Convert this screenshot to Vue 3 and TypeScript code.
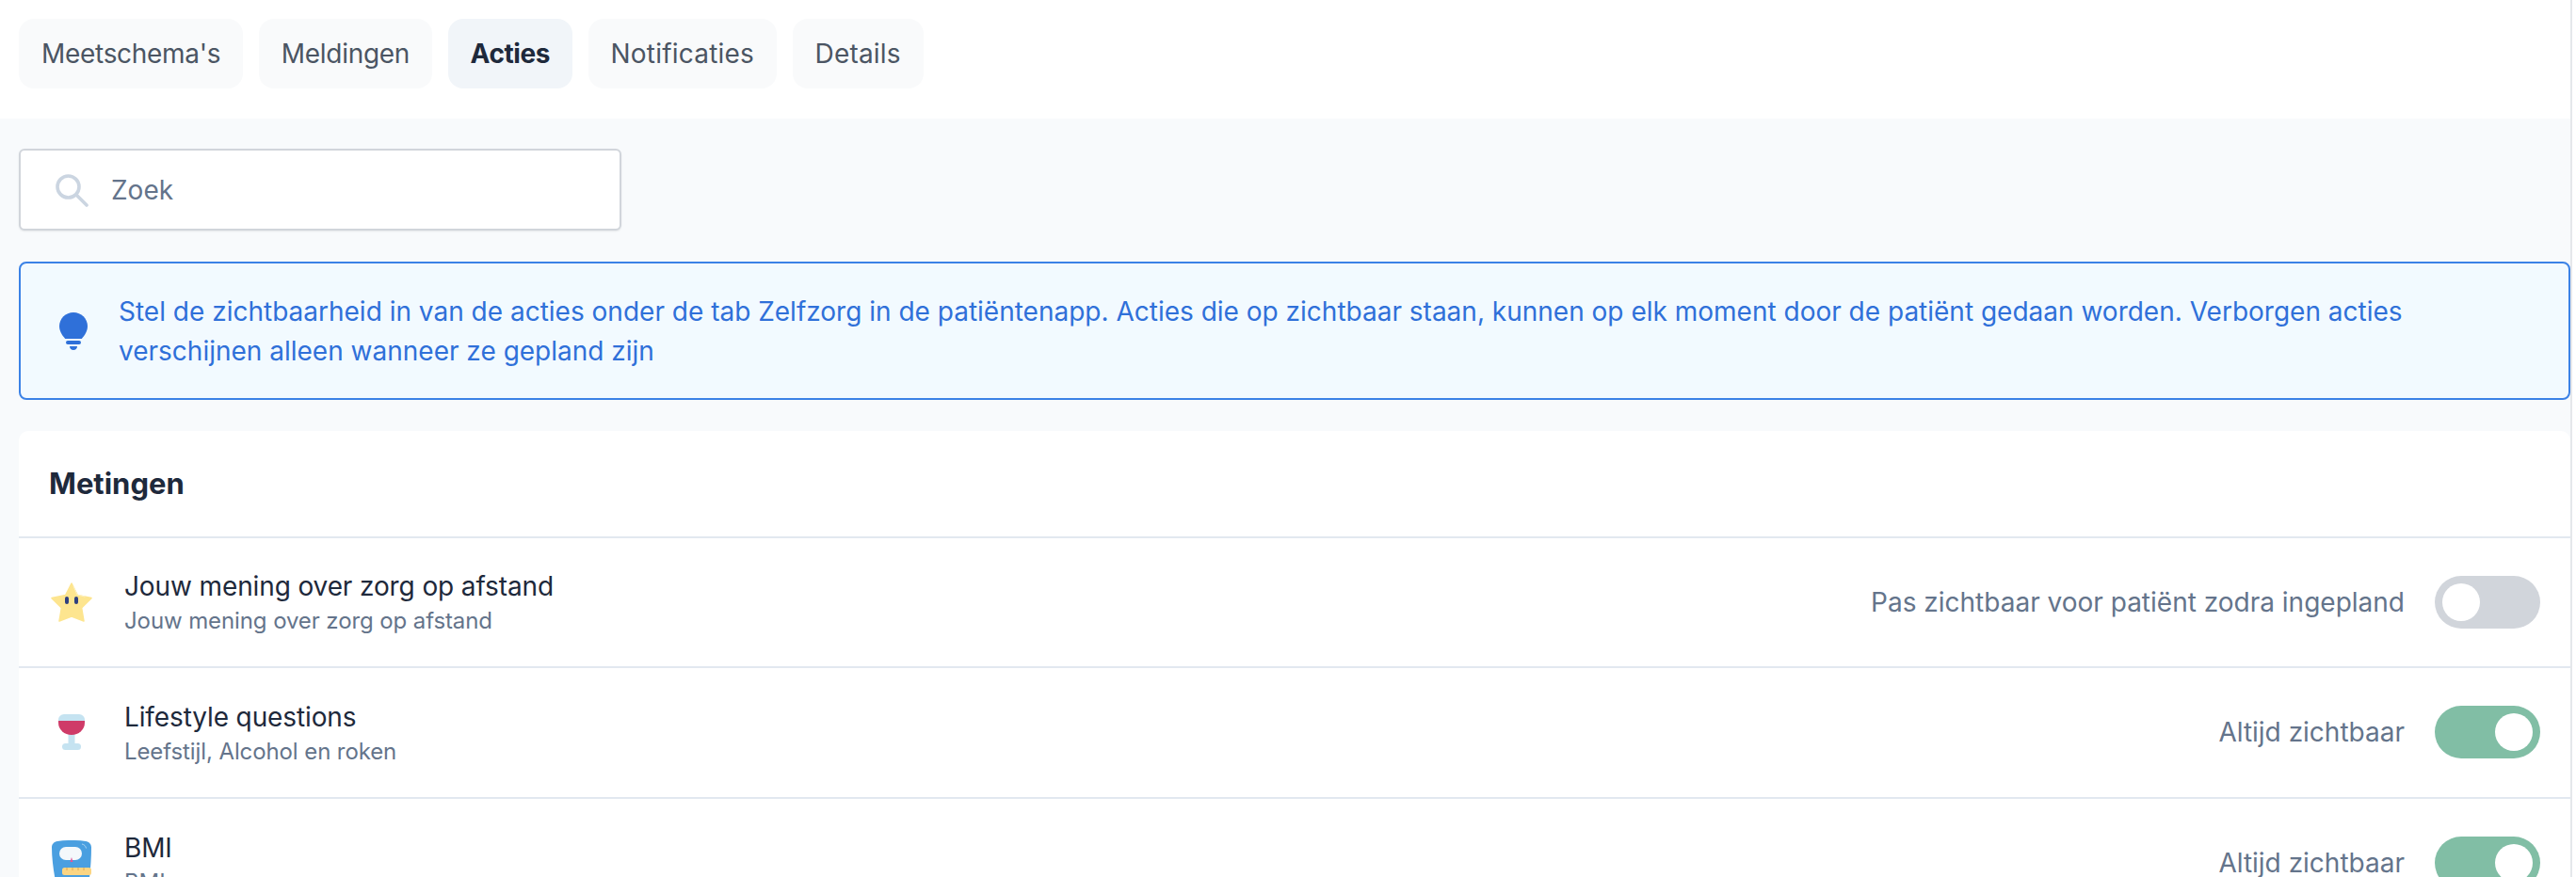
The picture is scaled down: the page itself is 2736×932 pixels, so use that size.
<script setup lang="ts">
interface Row { id: string; title: string; sub: string; label: string; on: boolean }
const tabs: string[] = ["Meetschema's", 'Meldingen', 'Acties', 'Notificaties', 'Details']
const looseTabs: string[] = ['Notificaties', 'Details']
const rows: Row[] = [
  { id: 'star', title: 'Jouw mening over zorg op afstand', sub: 'Jouw mening over zorg op afstand', label: 'Pas zichtbaar voor patiënt zodra ingepland', on: false },
  { id: 'wine', title: 'Lifestyle questions', sub: 'Leefstijl, Alcohol en roken', label: 'Altijd zichtbaar', on: true },
  { id: 'bmi', title: 'BMI', sub: 'BMI', label: 'Altijd zichtbaar', on: true },
]
</script>

<template>
  <div class="page">
    <nav class="tabs">
      <button v-for="t in tabs" :key="t" class="tab" :class="{ active: t === 'Acties', loose: looseTabs.includes(t) }">{{ t }}</button>
    </nav>
    <main class="content">
      <div class="search">
        <svg class="search-icon" viewBox="0 0 36 36" fill="none" stroke="#cbd5e1" stroke-width="3.6" stroke-linecap="round">
          <circle cx="14.5" cy="14.5" r="11.5" />
          <path d="M23 23l11 11" />
        </svg>
        <span class="placeholder">Zoek</span>
      </div>
      <div class="alert">
        <svg class="bulb" viewBox="0 0 30 40" fill="#2f70d9">
          <path d="M15 0C6.700 0 0 6.500 0 14.600c0 5.600 3.200 10 6.200 13.400h17.600c3-3.400 6.200-7.800 6.200-13.400C30 6.500 23.300 0 15 0z" />
          <rect x="7" y="30" width="16" height="4" rx="2" />
          <path d="M11 36h8c0 2.400-1.800 4-4 4s-4-1.600-4-4z" />
        </svg>
        <p>Stel de zichtbaarheid in van de acties onder de tab Zelfzorg in de patiëntenapp. Acties die op zichtbaar staan, kunnen op elk moment door de patiënt gedaan worden. Verborgen acties verschijnen alleen wanneer ze gepland zijn</p>
      </div>
      <section class="card">
        <h2>Metingen</h2>
        <div v-for="r in rows" :key="r.id" class="row">
          <div class="icon">
            <svg v-if="r.id === 'star'" viewBox="0 0 44 42" width="44" height="42">
              <path d="M22 1l6.400 12.600L43 16.600 32.600 27 35 41 22 36 9 41l2.400-14L1 16.600l14.600-3z" fill="#fde58f" stroke="#fde58f" stroke-width="1.500" stroke-linejoin="round" />
              <path d="M24 4l4 9 8 2" fill="none" stroke="#fef3c7" stroke-width="1" stroke-linecap="round" />
              <rect x="15" y="15" width="4" height="8" rx="2" fill="#2f3f7f" />
              <rect x="25" y="15" width="4" height="8" rx="2" fill="#2f3f7f" />
            </svg>
            <svg v-else-if="r.id === 'wine'" viewBox="0 0 28 38" width="28" height="38">
              <rect x="10.500" y="20" width="7" height="14" fill="#c5e3f1" />
              <rect x="4" y="31" width="20" height="7" rx="3.500" fill="#c5e3f1" />
              <path d="M0 6a6 6 0 0 1 6-6h16a6 6 0 0 1 6 6v1H0z" fill="#c5e3f1" />
              <path d="M0 7h28v2a14 13 0 0 1-28 0z" fill="#cf3b68" />
            </svg>
            <svg v-else viewBox="0 0 42 48" width="42" height="48">
              <path d="M6 1c9-1.400 21-1.400 30 0 3.500.5 6 3 6 6.500 0 12-1 26-2.500 36-.5 2.500-2 4.500-4 4.500H8c-2 0-3.500-2-4-4.500C2 33.500 0 19.500 0 7.500 0 4 2.500 1.500 6 1z" fill="#4a9fe0" />
              <path d="M32 4c2.500.5 4 2 4.500 4.500" fill="none" stroke="#a9d3f2" stroke-width="1" />
              <rect x="8" y="7" width="24" height="14" rx="7" fill="#f4f8fb" />
              <path d="M19.500 23l1.500-5 1.500 5z" fill="#e0559b" />
              <rect x="11" y="29" width="31" height="8" rx="2.500" fill="#fbd583" />
              <path d="M16 29v3M22 29v3M28 29v3M34 29v3" stroke="#e0a84e" stroke-width="1" />
            </svg>
          </div>
          <div class="text">
            <div class="title">{{ r.title }}</div>
            <div class="sub">{{ r.sub }}</div>
          </div>
          <span class="label">{{ r.label }}</span>
          <span class="toggle" :class="{ on: r.on }"><span class="knob"></span></span>
        </div>
      </section>
    </main>
  </div>
</template>

<style>
html, body { margin: 0; overflow: hidden; background: #fff; }
</style>

<style scoped>
.page {
  width: 2732px;
  height: 932px;
  overflow: hidden;
  border-right: 2px solid #e5e7eb;
  box-sizing: border-box;
  font-family: Inter, "Noto Sans", sans-serif;
  display: flex;
  flex-direction: column;
  background: #f8fafc;
}
.tabs {
  background: #fff;
  height: 126px;
  flex: none;
  box-sizing: border-box;
  padding: 20px 20px 0;
  display: flex;
  gap: 16.500px;
  align-items: flex-start;
}
.tab {
  height: 74px;
  padding: 0 24px;
  border: 0;
  border-radius: 16px;
  background: #f9fafb;
  color: #4b5563;
  font: 400 28px Inter, sans-serif;
  letter-spacing: -0.3px;
}
.tab.loose { letter-spacing: 0.2px; }
.tab.active { background: #f1f5f9; color: #1e293b; font-weight: 700; letter-spacing: -0.4px; }
.content { padding: 32px 0 0 20px; }
.search {
  width: 640px;
  height: 87px;
  box-sizing: border-box;
  background: #fff;
  border: 2px solid #d1d5db;
  border-radius: 6px;
  box-shadow: 0 1px 2px rgba(0, 0, 0, 0.08);
  display: flex;
  align-items: center;
  padding-left: 36px;
  gap: 24px;
}
.search-icon { width: 36px; height: 36px; }
.placeholder { font-size: 28px; color: #64748b; }
.alert {
  margin-top: 33px;
  height: 147px;
  box-sizing: border-box;
  background: #f2faff;
  border: 2px solid #3b82e6;
  border-radius: 8px;
  display: flex;
  align-items: center;
  padding: 0 40px 0 41px;
  gap: 33px;
}
.bulb { width: 30px; height: 40px; flex: none; }
.alert p {
  margin: 0;
  font-size: 28px;
  line-height: 42px;
  color: #2f70d9;
}
.card { margin-top: 33px; background: #fff; border-radius: 10px; }
h2 {
  margin: 0;
  height: 113.600px;
  box-sizing: border-box;
  padding: 0 32px;
  display: flex;
  align-items: center;
  font-size: 31px;
  font-weight: 700;
  color: #1e293b;
  border-bottom: 2px solid #e2e8f0;
}
.row {
  height: 136.600px;
  display: flex;
  align-items: center;
  padding: 0 32px;
  border-bottom: 2px solid #e2e8f0;
}
.icon { width: 48px; margin-right: 32px; flex: none; display: flex; justify-content: center; }
.text { flex: 1; padding-top: 2px; }
.title { font-size: 28px; line-height: 36px; color: #1e293b; letter-spacing: -0.12px; }
.sub { font-size: 24px; line-height: 32px; margin-top: 3px; color: #64748b; letter-spacing: -0.1px; }
.label { font-size: 28px; color: #64748b; margin-right: 32px; }
.toggle {
  width: 112px;
  height: 56px;
  border-radius: 28px;
  background: #d1d5db;
  box-sizing: border-box;
  padding: 8px;
  display: flex;
  flex: none;
}
.toggle.on { background: #81bea5; justify-content: flex-end; }
.knob { width: 40px; height: 40px; border-radius: 50%; background: #fff; }
</style>
